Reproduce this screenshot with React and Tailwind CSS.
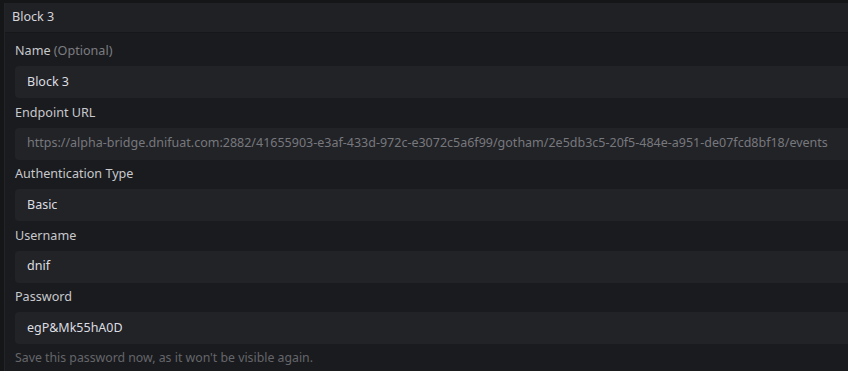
import React from "react";

const Field = ({ label, optional, value, muted }) => (
  <div className="flex flex-col">
    <div className="h-[20px] leading-[20px] text-[12.6px] text-[#c8c9cd] mb-[5px]">
      {label}
      {optional && <span className="text-[#7c7d82]"> (Optional)</span>}
    </div>
    <div
      className={`h-[32px] rounded-[4px] bg-[#222327] pl-[12px] flex items-center text-[12.5px] whitespace-nowrap overflow-hidden mr-[-10px] ${
        muted ? "text-[#77787d]" : "text-[#dcdde0]"
      }`}
    >
      {value}
    </div>
  </div>
);

export default function App() {
  return (
    <div
      className="w-[848px] h-[371px] overflow-hidden bg-[#151618] pt-[3px] pl-[4px]"
      style={{ fontFamily: '"Noto Sans", "Open Sans", sans-serif' }}
    >
      <div className="w-[860px] h-full border-l border-[#232428] bg-[#1a1b1e]">
        <div className="h-[30px] bg-[#202125] border-b border-[#161719] flex items-center pl-[7px] text-[12.6px] text-[#d4d5d8]">
          Block 3
        </div>
        <div className="pl-[10px] pt-[8px] flex flex-col gap-[4.5px]">
          <Field label="Name" optional value="Block 3" />
          <Field
            label="Endpoint URL"
            muted
            value="https://alpha-bridge.dnifuat.com:2882/41655903-e3af-433d-972c-e3072c5a6f99/gotham/2e5db3c5-20f5-484e-a951-de07fcd8bf18/events"
          />
          <Field label="Authentication Type" value="Basic" />
          <Field label="Username" value="dnif" />
          <Field label="Password" value="egP&Mk55hA0D" />
          <div className="text-[12.3px] text-[#65666b] leading-[16px] mt-[1px]">
            Save this password now, as it won't be visible again.
          </div>
        </div>
      </div>
    </div>
  );
}
